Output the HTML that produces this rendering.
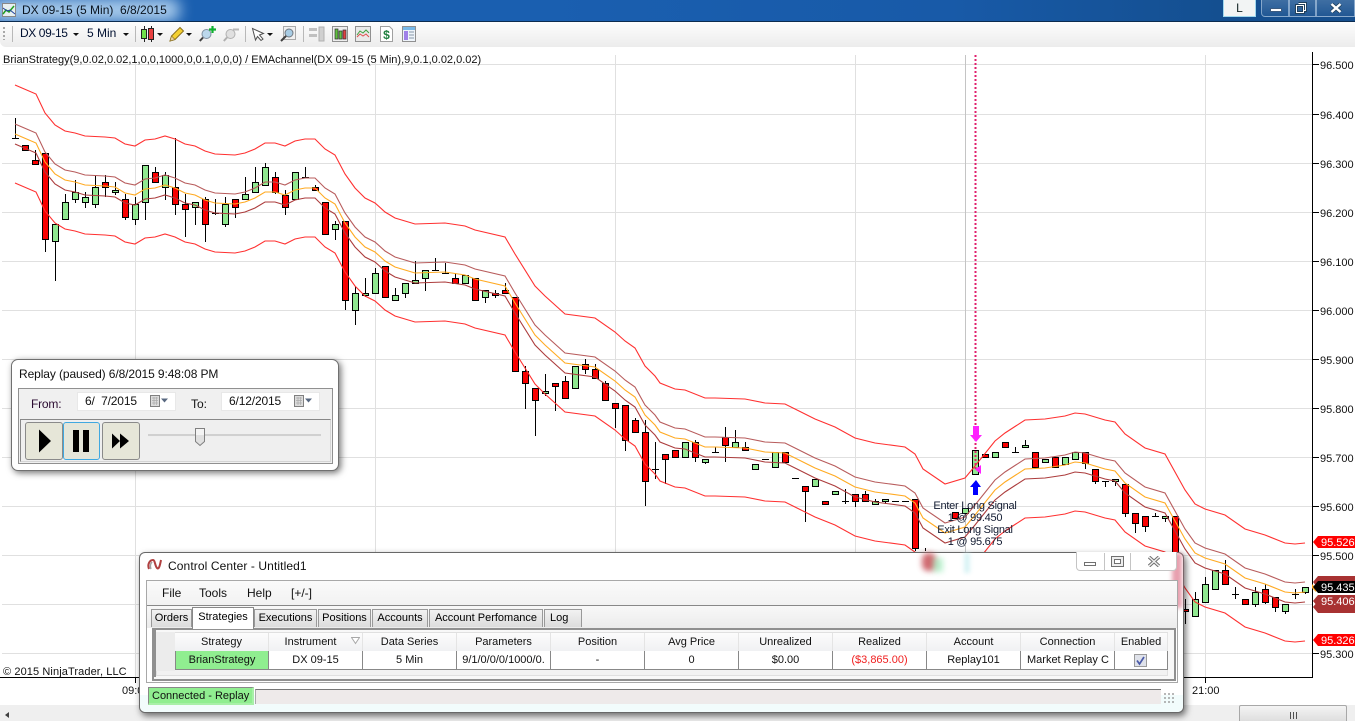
<!DOCTYPE html>
<html><head><meta charset="utf-8"><title>DX 09-15 (5 Min) 6/8/2015</title>
<style>
html,body{margin:0;padding:0;width:1355px;height:721px;overflow:hidden;background:#fff;font-family:"Liberation Sans",Arial,sans-serif;color:#000}
.a{position:absolute}
.t{position:absolute;white-space:nowrap;font-size:12px;line-height:14px}
#tb{left:0;top:0;width:1355px;height:21px;background:linear-gradient(90deg,#1a5fb0 0,#1a5fb0 40%,#185aa8 70%,#144f90 90%,#164f8e 100%);border-bottom:1px solid #0c2c50;box-sizing:content-box}
#glow{left:-10px;top:-2px;width:190px;height:24px;background:rgba(190,220,245,.85);filter:blur(7px);border-radius:10px}
#tool{left:0;top:22px;width:1355px;height:25px;background:linear-gradient(#fdfdfd,#ececec);border-radius:0 0 0 6px}
.sep{position:absolute;top:26px;width:1px;height:16px;background:#b8b8b8}
.ar{position:absolute;top:33px;width:0;height:0;border-left:3px solid transparent;border-right:3px solid transparent;border-top:3px solid #111}
.cap{position:absolute;top:0;height:17px;box-sizing:border-box;border:1px solid rgba(200,220,240,.55);border-top:0;background:linear-gradient(rgba(255,255,255,.18),rgba(255,255,255,.05))}
/* replay */
#rp{left:11px;top:359px;width:328px;height:112px;box-sizing:border-box;background:#fff;border:1px solid #707070;border-radius:7px;box-shadow:2px 2px 7px rgba(0,0,0,.55)}
.di{position:absolute;top:392px;height:19px;background:#fff;border:1px solid #e8e8e8;box-sizing:border-box}
.pb{position:absolute;box-sizing:border-box;background:#e6e6d8;border:1px solid #8a8a8a;border-radius:3px}
/* CC */
#cc{left:139px;top:552px;width:1045px;height:161px;box-sizing:border-box;background:#fff;border:1px solid #686868;border-radius:6px 6px 6px 6px;box-shadow:2px 3px 7px rgba(0,0,0,.55)}
.tab{position:absolute;top:609px;height:18px;box-sizing:border-box;border:1px solid #999;border-bottom:0;background:linear-gradient(#f2f2f2,#dcdcdc);font-size:11px;line-height:17px;text-align:center;white-space:nowrap;overflow:hidden}
.h{position:absolute;top:633px;height:18px;background:linear-gradient(#fcfcfc,#f0f1f3);border-right:1px solid #e4e4e4;box-sizing:border-box;font-size:11px;line-height:18px;text-align:center;white-space:nowrap;color:#111}
.c{position:absolute;top:651px;height:19px;background:#fff;border-right:1px solid #888;border-bottom:1px solid #888;box-sizing:border-box;font-size:11px;line-height:19px;text-align:center;white-space:nowrap;overflow:hidden;color:#111}
</style></head><body>

<svg class="a" style="left:0;top:0" width="1355" height="721" viewBox="0 0 1355 721" font-family="Liberation Sans,Arial,sans-serif">
<defs><path id="b" fill="none" d="M15 134L36 143 45 162 55 174 65 180 75 182 85 185 105 186 115 187 125 193 135 195 145 189 155 188 165 185 175 188 185 193 195 195 205 200 215 203 235 204 245 202 255 198 265 192 275 192 285 195 295 190 305 188 315 188 325 198 335 204 345 223 355 237 365 247 375 252 385 261 395 267 405 270 415 273 445 272 465 275 475 279 505 286 515 303 535 335 545 345 565 363 595 367 615 381 625 390 635 397 645 415 655 425 660 432 675 438 685 439 705 447 715 447 745 448 765 452 785 453 795 458 815 468 835 476 855 487 875 492 905 496 915 503 923 518 945 533 965 527 975 515 995 490 1005 482 1025 469 1045 468 1065 465 1075 462 1085 463 1105 469 1115 471 1125 483 1145 497 1165 503 1185 539 1195 553 1205 558 1225 564 1245 578 1265 584 1285 592 1295 593 1305 592"/></defs>
<!-- grid -->
<path stroke="#e0e0e0" fill="none" d="M2 64.5H1312M2 114.5H1312M2 163.5H1312M2 212.5H1312M2 261.5H1312M2 310.5H1312M2 359.5H1312M2 408.5H1312M2 457.5H1312M2 506.5H1312M2 555.5H1312M2 604.5H1312M2 653.5H1312M135.5 55V677M375.5 55V677M615.5 55V677M855.5 55V677M1205.5 55V677"/>
<path stroke="#c4c4c4" fill="none" d="M965.5 55V560"/>
<!-- wicks -->
<path stroke="#000" fill="none" d="M15.5 118V138M12 138.5h7M35.5 150V165M45.5 239V252M55.5 241V281M65.5 194V202M75.5 180V203M85.5 192V208M95.5 175V208M105.5 175V197M115.5 182V195M125.5 194V220M135.5 197V225M145.5 202V220M155.5 167V172M165.5 172V200M175.5 138V215M185.5 194V237M195.5 207V225M205.5 197V242M215.5 199V215M212 213.5h7M225.5 197V227M235.5 207V218M245.5 177V194M255.5 167V182M265.5 163V167M275.5 172V194M285.5 190V215M305.5 167V177M302 177.5h7M315.5 185V187M335.5 221V240M345.5 300V310M355.5 286V325M365.5 278V297M375.5 268V273M395.5 288V295M405.5 293V298M415.5 261V283M425.5 278V291M435.5 258V270M432 270.5h7M445.5 263V273M442 273.5h7M455.5 273V278M485.5 297V303M495.5 290V298M505.5 283V290M525.5 366V409M535.5 400V436M545.5 374V396M555.5 386V411M565.5 376V381M585.5 359V374M595.5 364V369M605.5 381V383M615.5 408V428M625.5 440V451M635.5 418V420M645.5 420V506M655.5 442V479M652 469.5h7M665.5 459V484M695.5 440V462M705.5 462V464M715.5 447V452M712 452.5h7M725.5 427V462M735.5 430V442M745.5 442V447M762 459.5h7M792 478.5h7M805.5 491V522M845.5 489V504M842 501.5h7M855.5 501V507M865.5 491V494M875.5 499V501M885.5 501V504M892 501.5h7M902 501.5h7M915.5 548V551M925.5 548V551M1015.5 447V452M1012 452.5h7M1025.5 440V445M1035.5 467V469M1085.5 463V469M1095.5 481V484M1102 481.5h7M1105.5 481V487M1115.5 481V486M1125.5 513V517M1135.5 523V533M1145.5 526V532M1152 516.5h7M1155.5 513V516M1165.5 518V522M1185.5 599V624M1195.5 592V599M1205.5 577V584M1225.5 560V570M1235.5 587V599M1232 594.5h7M1255.5 587V592M1255.5 604V607M1265.5 584V589M1265.5 602V604M1275.5 607V612M1285.5 611V614M1295.5 589V599M1292 594.5h7M1305.5 592V594"/>
<!-- red bodies -->
<path stroke="#000" fill="#f80000" d="M22.5 145.5h6v5h-6zM32.5 160.5h6v4h-6zM42.5 153.5h6v86h-6zM102.5 182.5h6v5h-6zM122.5 199.5h6v18h-6zM152.5 172.5h6v10h-6zM172.5 187.5h6v17h-6zM182.5 204.5h6v5h-6zM202.5 199.5h6v25h-6zM232.5 199.5h6v8h-6zM272.5 177.5h6v15h-6zM282.5 195.5h6v12h-6zM312.5 187.5h6v3h-6zM322.5 202.5h6v32h-6zM342.5 221.5h6v79h-6zM382.5 266.5h6v31h-6zM452.5 278.5h6v5h-6zM472.5 278.5h6v22h-6zM492.5 293.5h6v2h-6zM502.5 290.5h6v3h-6zM512.5 297.5h6v74h-6zM522.5 371.5h6v12h-6zM532.5 388.5h6v12h-6zM552.5 383.5h6v3h-6zM562.5 381.5h6v17h-6zM582.5 364.5h6v5h-6zM592.5 369.5h6v9h-6zM602.5 383.5h6v17h-6zM612.5 403.5h6v5h-6zM622.5 405.5h6v35h-6zM632.5 420.5h6v12h-6zM642.5 432.5h6v49h-6zM662.5 454.5h6v5h-6zM672.5 450.5h6v7h-6zM692.5 442.5h6v15h-6zM722.5 437.5h6v8h-6zM742.5 447.5h6v3h-6zM782.5 452.5h6v10h-6zM802.5 486.5h6v5h-6zM822.5 501.5h6v3h-6zM852.5 494.5h6v7h-6zM862.5 494.5h6v7h-6zM912.5 499.5h6v49h-6zM952.5 512.5h6v6h-6zM982.5 454.5h6v3h-6zM1002.5 442.5h6v5h-6zM1032.5 452.5h6v15h-6zM1052.5 457.5h6v10h-6zM1082.5 452.5h6v11h-6zM1092.5 469.5h6v12h-6zM1122.5 484.5h6v29h-6zM1132.5 513.5h6v10h-6zM1142.5 516.5h6v10h-6zM1172.5 516.5h6v50h-6zM1182.5 609.5h6v2h-6zM1222.5 570.5h6v14h-6zM1242.5 599.5h6v5h-6zM1262.5 589.5h6v13h-6zM1272.5 597.5h6v10h-6z"/>
<!-- green bodies -->
<path stroke="#000" fill="#90e890" d="M52.5 224.5h6v17h-6zM62.5 202.5h6v17h-6zM72.5 192.5h6v7h-6zM82.5 197.5h6v5h-6zM92.5 187.5h6v17h-6zM112.5 190.5h6v2h-6zM132.5 204.5h6v15h-6zM142.5 165.5h6v37h-6zM162.5 175.5h6v12h-6zM192.5 202.5h6v5h-6zM222.5 204.5h6v20h-6zM242.5 194.5h6v5h-6zM252.5 182.5h6v10h-6zM262.5 167.5h6v18h-6zM292.5 172.5h6v27h-6zM332.5 224.5h6v5h-6zM352.5 293.5h6v17h-6zM362.5 293.5h6v2h-6zM372.5 273.5h6v20h-6zM392.5 295.5h6v5h-6zM402.5 283.5h6v10h-6zM412.5 280.5h6v3h-6zM422.5 270.5h6v8h-6zM462.5 275.5h6v8h-6zM482.5 290.5h6v7h-6zM542.5 391.5h6v2h-6zM572.5 366.5h6v22h-6zM682.5 442.5h6v15h-6zM702.5 459.5h6v3h-6zM732.5 442.5h6v5h-6zM752.5 464.5h6v5h-6zM772.5 452.5h6v15h-6zM812.5 479.5h6v7h-6zM832.5 491.5h6v3h-6zM872.5 501.5h6v3h-6zM882.5 499.5h6v2h-6zM962.5 508.5h6v5h-6zM972.5 450.5h6v24h-6zM992.5 452.5h6v5h-6zM1022.5 445.5h6v2h-6zM1042.5 459.5h6v3h-6zM1062.5 457.5h6v7h-6zM1072.5 452.5h6v7h-6zM1112.5 479.5h6v2h-6zM1162.5 516.5h6v2h-6zM1192.5 599.5h6v17h-6zM1202.5 584.5h6v18h-6zM1212.5 570.5h6v19h-6zM1252.5 592.5h6v12h-6zM1282.5 604.5h6v7h-6zM1302.5 587.5h6v5h-6z"/>
<!-- bands -->
<use href="#b" y="-49" stroke="#ff3030" stroke-width="1.1"/>
<use href="#b" y="-10" stroke="#b85c5c" stroke-width="1.1"/>
<use href="#b" y="0" stroke="#ffaa22" stroke-width="1.1"/>
<use href="#b" y="10" stroke="#ac3c3c" stroke-width="1.1"/>
<use href="#b" y="49" stroke="#ff3030" stroke-width="1.1"/>
<!-- signal -->
<path stroke="#e0206e" stroke-width="2" stroke-dasharray="2 2" fill="none" d="M975.5 55V470"/>
<path fill="#ff20ff" d="M973 426h6v9h3l-6 7-6-7h3z"/>
<path fill="#ff20ff" d="M981 465v9l-6-4.5z"/>
<path fill="#0000ff" d="M976 480l5 7h-3v8h-5v-8h-3z"/>
<g font-size="11" text-anchor="middle" fill="#111a30" letter-spacing="-.25">
<text x="975" y="509">Enter Long Signal</text>
<text x="975" y="521">1 @ 99.450</text>
<text x="975" y="533">Exit Long Signal</text>
<text x="975" y="545">1 @ 95.675</text>
</g>
<!-- axis -->
<path stroke="#000" fill="none" d="M1312.5 52V678M0 677.5H1312.5M1312 64.5h7M1312 114.5h7M1312 163.5h7M1312 212.5h7M1312 261.5h7M1312 310.5h7M1312 359.5h7M1312 408.5h7M1312 457.5h7M1312 506.5h7M1312 555.5h7M1312 653.5h7M135.5 677v6M1205.5 677v6"/>
<g font-size="11" fill="#111">
<text x="1320" y="69">96.500</text><text x="1320" y="119">96.400</text><text x="1320" y="168">96.300</text><text x="1320" y="217">96.200</text><text x="1320" y="266">96.100</text><text x="1320" y="315">96.000</text><text x="1320" y="364">95.900</text><text x="1320" y="413">95.800</text><text x="1320" y="462">95.700</text><text x="1320" y="511">95.600</text><text x="1320" y="560">95.500</text><text x="1320" y="658">95.300</text>
<text x="122" y="694">09:00</text><text x="1192" y="694">21:00</text>
<text x="3" y="675" letter-spacing=".1">© 2015 NinjaTrader, LLC</text>
<text x="3" y="63">BrianStrategy(9,0.02,0.02,1,0,0,1000,0,0.1,0,0,0) / EMAchannel(DX 09-15 (5 Min),9,0.1,0.02,0.02)</text>
</g>
<!-- flags -->
<path fill="#ff0000" d="M1313 542l5-6h37v12h-37z"/>
<path fill="#a83232" d="M1313 582l5-6h37v12h-37z"/>
<path fill="#a83232" d="M1313 607l5-6h37v12h-37z"/>
<path fill="#ffaa22" d="M1312 584l5 5-1 3-4-4z"/>
<path fill="#000" d="M1313 587l5-6h37v12h-37z"/>
<path fill="#a83232" d="M1313 601l5-6h37v12h-37z"/>
<path fill="#ff0000" d="M1313 640l5-6h37v12h-37z"/>
<g font-size="11" fill="#fff"><text x="1321" y="546">95.526</text><text x="1321" y="591">95.435</text><text x="1321" y="605">95.406</text><text x="1321" y="644">95.326</text></g>
</svg>

<!-- title bar -->
<div class="a" id="tb"></div>
<div class="a" style="left:0;top:0;width:200px;height:21px;overflow:hidden"><div class="a" id="glow"></div></div>
<svg class="a" style="left:2px;top:3px" width="14" height="14" viewBox="0 0 14 14"><rect x=".5" y=".5" width="13" height="13" fill="#e8f0f0" stroke="#888"/><path d="M1 11l3-4 3 2 5-6" stroke="#20a020" fill="none" stroke-width="1.5"/><path d="M1 5l4 3 3-1 5 4" stroke="#2040a0" fill="none"/></svg>
<div class="t" style="left:22px;top:3px;font-size:12px;color:#0a1420">DX 09-15 (5 Min)&nbsp; 6/8/2015</div>
<div class="a" style="left:1223px;top:0;width:33px;height:17px;box-sizing:border-box;background:#f2f4f4;border:1px solid #9fd8ee;border-top:0;font-size:12px;line-height:16px;text-align:center;color:#122">L</div>
<div class="cap" style="left:1261px;width:28px;border-radius:0 0 0 4px"></div>
<div class="cap" style="left:1289px;width:27px"></div>
<div class="cap" style="left:1316px;width:39px"></div>
<div class="a" style="left:1270px;top:8px;width:10px;height:3px;background:#fff;border:1px solid #3a5a80;box-sizing:content-box;height:2px"></div>
<svg class="a" style="left:1295px;top:2px" width="13" height="12" viewBox="0 0 13 12"><path d="M3.5 1.5h7v7h-2M1.5 3.5h7v7h-7z" fill="none" stroke="#20405c" stroke-width="3"/><path d="M3.5 1.5h7v7h-2M1.5 3.5h7v7h-7z" fill="none" stroke="#fff"/></svg>
<svg class="a" style="left:1330px;top:3px" width="12" height="10" viewBox="0 0 12 10"><path d="M1.5 1l9 8M10.5 1l-9 8" stroke="#20405c" stroke-width="4"/><path d="M1.5 1l9 8M10.5 1l-9 8" stroke="#fff" stroke-width="2.4"/></svg>

<!-- toolbar -->
<div class="a" id="tool"></div>
<div class="a" style="left:3px;top:27px;width:2px;height:13px;background:repeating-linear-gradient(#a8a8a8 0 2px,transparent 2px 4px)"></div>
<div class="sep" style="left:12px"></div><div class="sep" style="left:135px"></div><div class="sep" style="left:245px"></div><div class="sep" style="left:303px"></div>
<div class="t" style="left:20px;top:26px;font-size:12px;color:#001030;letter-spacing:-.4px">DX 09-15</div><div class="ar" style="left:73px"></div>
<div class="t" style="left:87px;top:26px;font-size:12px;color:#001030">5 Min</div><div class="ar" style="left:123px"></div>
<svg class="a" style="left:140px;top:25px" width="16" height="18" viewBox="0 0 16 18"><path d="M4.5 1v16M11.5 1v16" stroke="#222"/><rect x="1.5" y="4.5" width="5" height="9" fill="#6fe04a" stroke="#222"/><rect x="8.5" y="3.5" width="5" height="11" fill="#e84040" stroke="#222"/></svg><div class="ar" style="left:157px"></div>
<svg class="a" style="left:169px;top:26px" width="16" height="16" viewBox="0 0 16 16"><path d="M1 15l1.5-5L11 1.5l3.5 3.5L6 13.5z" fill="#f4d030" stroke="#8a7020"/><path d="M1 15l1.5-5 3.5 3.5z" fill="#e8d0a0" stroke="#8a7020" stroke-width=".6"/></svg><div class="ar" style="left:186px"></div>
<svg class="a" style="left:199px;top:26px" width="17" height="16" viewBox="0 0 17 16"><circle cx="7.5" cy="8" r="4.5" fill="#bcd8ec" stroke="#8090a0"/><path d="M4 11.5L0.8 15" stroke="#404040" stroke-width="2"/><path d="M13.5 0v7M10 3.5h7" stroke="#10b030" stroke-width="2.2"/></svg>
<svg class="a" style="left:223px;top:26px" width="17" height="16" viewBox="0 0 17 16"><circle cx="7.5" cy="8" r="4.5" fill="#e0e0e0" stroke="#b0b0b0"/><path d="M4 11.5L0.8 15" stroke="#b0b0b0" stroke-width="2"/><path d="M10 3.5h6" stroke="#b8b8b8" stroke-width="2"/></svg>
<svg class="a" style="left:251px;top:27px" width="14" height="15" viewBox="0 0 14 15"><path d="M1.5 1.5l11 5-4 1.5 3.5 4-2 1.5-3.5-4-2 3.5z" fill="#fff" stroke="#505050"/></svg><div class="ar" style="left:267px"></div>
<svg class="a" style="left:280px;top:26px" width="16" height="16" viewBox="0 0 16 16"><rect x="3.5" y=".5" width="12" height="13" fill="#f0f0f0" stroke="#aaa"/><circle cx="9" cy="7" r="4" fill="#a8cce4" stroke="#707880"/><path d="M6 10L1 15" stroke="#404040" stroke-width="2"/></svg>
<svg class="a" style="left:309px;top:26px" width="16" height="16" viewBox="0 0 16 16"><path d="M0 2h8v3H0zM0 8h8v3H0z" fill="#c0c0c0"/><rect x="10" y="1" width="5" height="14" fill="#d0d0d0" stroke="#b0b0b0"/></svg>
<svg class="a" style="left:332px;top:26px" width="16" height="16" viewBox="0 0 16 16"><rect x=".5" y=".5" width="15" height="15" fill="#eee" stroke="#909090"/><path d="M3 3v10h3V3zM7 5v8h3V5z" fill="#60c040" stroke="#333" stroke-width=".7"/><path d="M11 4v9h3V4z" fill="#e04040" stroke="#333" stroke-width=".7"/></svg>
<svg class="a" style="left:355px;top:26px" width="16" height="16" viewBox="0 0 16 16"><rect x=".5" y=".5" width="15" height="15" fill="#eaeaea" stroke="#909090"/><path d="M2 9l3-4 3 2 3-3 3 3" stroke="#40a040" fill="none"/><path d="M2 11l3-3 3 2 3-2 3 3" stroke="#e05050" fill="none"/></svg>
<svg class="a" style="left:380px;top:26px" width="13" height="16" viewBox="0 0 13 16"><path d="M.5.5h9l3 3v12H.5z" fill="#fff" stroke="#a0a0a0"/><text x="6.5" y="13" font-size="12" font-weight="bold" text-anchor="middle" fill="#208040" font-family="Liberation Sans,sans-serif">$</text></svg>
<svg class="a" style="left:402px;top:26px" width="14" height="16" viewBox="0 0 14 16"><rect x=".5" y=".5" width="13" height="15" fill="#eef4fa" stroke="#909090"/><rect x="1" y="1" width="12" height="3" fill="#78b8e8"/><rect x="2" y="5" width="4" height="9" fill="#a080e8"/><path d="M7 6h5M7 9h5M7 12h5" stroke="#8898a8"/></svg>

<!-- scrollbar -->
<div class="a" style="left:0;top:705px;width:1355px;height:16px;background:#efefef"></div>
<div class="a" style="left:5px;top:712px;width:0;height:0;border-top:3px solid transparent;border-bottom:3px solid transparent;border-right:4px solid #404040"></div>
<div class="a" style="left:1239px;top:705px;width:108px;height:16px;box-sizing:border-box;border:1px solid #a8a8a8;border-bottom:0;border-radius:2px 2px 0 0;background:linear-gradient(#f4f4f4,#dedede)"></div>
<div class="a" style="left:1290px;top:712px;width:7px;height:7px;background:repeating-linear-gradient(90deg,#505050 0 1px,transparent 1px 3px)"></div>

<!-- replay -->
<div class="a" id="rp"></div>
<div class="t" style="left:19px;top:367px;color:#111;letter-spacing:-.1px">Replay (paused) 6/8/2015 9:48:08 PM</div>
<div class="a" style="left:18px;top:388px;width:315px;height:76px;box-sizing:border-box;background:#f0f0f0;border:1px solid #909090"></div>
<div class="t" style="left:31px;top:397px;color:#2a0a30;letter-spacing:-.2px">From:</div>
<div class="t" style="left:191px;top:397px;color:#111">To:</div>
<div class="di" style="left:77px;width:99px"></div><div class="di" style="left:221px;width:99px"></div>
<div class="t" style="left:85px;top:394px;color:#111;letter-spacing:-.15px">6/&nbsp; 7/2015</div>
<div class="t" style="left:229px;top:394px;color:#111;letter-spacing:-.15px">6/12/2015</div>
<svg class="a" style="left:150px;top:395px" width="26" height="13" viewBox="0 0 26 13"><rect x=".5" y=".5" width="9" height="11" fill="#dcdcdc" stroke="#808080"/><path d="M2 3h6M2 5.5h6M2 8h6M4 2v8M6.5 2v8" stroke="#aaa" stroke-width=".7"/><path d="M11 3.5h7l-3.5 4z" fill="#586880"/></svg>
<svg class="a" style="left:294px;top:395px" width="26" height="13" viewBox="0 0 26 13"><rect x=".5" y=".5" width="9" height="11" fill="#dcdcdc" stroke="#808080"/><path d="M2 3h6M2 5.5h6M2 8h6M4 2v8M6.5 2v8" stroke="#aaa" stroke-width=".7"/><path d="M11 3.5h7l-3.5 4z" fill="#586880"/></svg>
<div class="a" style="left:20px;top:419px;width:311px;height:43px;box-sizing:border-box;border:1px solid #d4d4d4;border-top:1px solid #888;border-left:1px solid #888;background:#efefef"></div>
<div class="pb" style="left:25px;top:422px;width:38px;height:38px"></div>
<div class="pb" style="left:63px;top:422px;width:37px;height:38px;border-color:#40a8e0;background:#e4e6da"></div>
<div class="pb" style="left:102px;top:422px;width:38px;height:38px"></div>
<svg class="a" style="left:25px;top:422px" width="115" height="38" viewBox="0 0 115 38"><path d="M14 7.500v23l12-11.500z"/><rect x="48" y="8" width="6" height="22"/><rect x="58" y="8" width="6" height="22"/><path d="M87 11.500v15l8-7.500v7.500l9-7.500-9-7.500v7.500z"/></svg>
<div class="a" style="left:148px;top:434px;width:173px;height:2px;background:#d0d0d0;border-bottom:1px solid #eee"></div>
<svg class="a" style="left:194px;top:427px" width="12" height="20" viewBox="0 0 12 20"><path d="M1.500 1.500h9v13l-4.500 4-4.500-4z" fill="#e0e0e0" stroke="#808080"/><path d="M2 2h8v6H2z" fill="#f4f4f4"/></svg>

<!-- control center -->
<div class="a" id="cc"></div>
<div class="a" style="left:140px;top:695px;width:1043px;height:17px;background:#f2fcfc;border-radius:0 0 6px 6px"></div>
<div class="a" style="left:922px;top:553px;width:14px;height:18px;background:#c85058;filter:blur(3px);opacity:.85;border-radius:6px"></div>
<div class="a" style="left:933px;top:558px;width:10px;height:14px;background:#90e8b0;filter:blur(3px);opacity:.6"></div>
<div class="a" style="left:964px;top:553px;width:6px;height:20px;background:#c8eef0;filter:blur(2px);opacity:.7"></div>
<div class="a" style="left:1172px;top:553px;width:10px;height:55px;background:#d86078;filter:blur(2px);opacity:.6"></div>
<svg class="a" style="left:147px;top:558px" width="16" height="14" viewBox="0 0 16 14"><path d="M2 11C0 6 3 2 6 2c2 0 2 6 4 8s3-3 4-8" fill="none" stroke="#b04040" stroke-width="2"/><path d="M5 4C3 6 3 9 4 11" fill="none" stroke="#a0a0a0" stroke-width="1.500"/></svg>
<div class="t" style="left:168px;top:559px;color:#111;letter-spacing:.1px">Control Center - Untitled1</div>
<div class="a" style="left:1076px;top:552px;width:101px;height:19px;box-sizing:border-box;border:1px solid #c4c4c4;border-top:0;border-radius:0 0 4px 4px;background:#fff"></div>
<div class="a" style="left:1104px;top:553px;width:1px;height:17px;background:#c4c4c4"></div>
<div class="a" style="left:1130px;top:553px;width:1px;height:17px;background:#c4c4c4"></div>
<div class="a" style="left:1084px;top:562px;width:12px;height:4px;box-sizing:border-box;border:1px solid #707070"></div>
<svg class="a" style="left:1111px;top:556px" width="13" height="11" viewBox="0 0 13 11"><rect x=".5" y=".5" width="12" height="10" fill="#eee" stroke="#707070"/><rect x="3.500" y="3.500" width="6" height="4" fill="#fff" stroke="#707070"/></svg>
<svg class="a" style="left:1148px;top:556px" width="12" height="11" viewBox="0 0 12 11"><path d="M1 1l10 9M11 1l-10 9" stroke="#707070" stroke-width="3.400"/><path d="M1 1l10 9M11 1l-10 9" stroke="#f0f0f0" stroke-width="1.400"/></svg>

<div class="a" style="left:146px;top:580px;width:1032px;height:103px;box-sizing:border-box;border:1px solid #a8a8a8;background:#fff"></div>
<div class="a" style="left:147px;top:581px;width:1030px;height:24px;background:linear-gradient(#fafafa,#f2f2f2);border-bottom:1px solid #888"></div>
<div class="t" style="left:162px;top:586px;color:#111">File</div>
<div class="t" style="left:199px;top:586px;color:#111">Tools</div>
<div class="t" style="left:247px;top:586px;color:#111">Help</div>
<div class="t" style="left:291px;top:586px;color:#111">[+/-]</div>
<div class="a" style="left:147px;top:606px;width:1030px;height:22px;background:linear-gradient(#f8f8f8,#ececec)"></div>
<div class="tab" style="left:151px;width:41px">Orders</div>
<div class="tab" style="left:254px;width:63px">Executions</div>
<div class="tab" style="left:318px;width:53px">Positions</div>
<div class="tab" style="left:372px;width:56px">Accounts</div>
<div class="tab" style="left:429px;width:114px">Account Perfomance</div>
<div class="tab" style="left:544px;width:38px;text-align:left;padding-left:5px">Log</div>
<div class="tab" style="left:192px;top:607px;width:62px;height:22px;background:#fff;border-color:#888;line-height:18px;z-index:2">Strategies</div>

<div class="a" style="left:152px;top:628px;width:1024px;height:53px;box-sizing:border-box;border:2px solid #909090;background:#f8f8f8;border-top-width:2px"></div>
<div class="a" style="left:156px;top:632px;width:1012px;height:44px;box-sizing:border-box;border:1px solid #e0e0e0;background:#f2f2f2"></div>
<div class="a" style="left:154px;top:630px;width:2px;height:47px;background:#909090"></div>
<div class="a" style="left:156px;top:632px;width:19px;height:39px;background:#ececec"></div>

<div class="h" style="left:175px;width:94px">Strategy</div>
<div class="h" style="left:269px;width:94px;padding-right:10px">Instrument</div>
<svg class="a" style="left:351px;top:637px" width="9" height="8" viewBox="0 0 9 8"><path d="M.5.500h8l-4 6z" fill="#fff" stroke="#a8a8a8"/></svg>
<div class="h" style="left:363px;width:94px">Data Series</div>
<div class="h" style="left:457px;width:94px">Parameters</div>
<div class="h" style="left:551px;width:94px">Position</div>
<div class="h" style="left:645px;width:94px">Avg Price</div>
<div class="h" style="left:739px;width:94px">Unrealized</div>
<div class="h" style="left:833px;width:94px">Realized</div>
<div class="h" style="left:927px;width:94px">Account</div>
<div class="h" style="left:1021px;width:94px">Connection</div>
<div class="h" style="left:1115px;width:53px">Enabled</div>

<div class="c" style="left:175px;width:94px;background:#90ee90;border-left:1px solid #888">BrianStrategy</div>
<div class="c" style="left:269px;width:94px">DX 09-15</div>
<div class="c" style="left:363px;width:94px">5 Min</div>
<div class="c" style="left:457px;width:94px">9/1/0/0/0/1000/0.</div>
<div class="c" style="left:551px;width:94px">-</div>
<div class="c" style="left:645px;width:94px">0</div>
<div class="c" style="left:739px;width:94px">$0.00</div>
<div class="c" style="left:833px;width:94px;color:#f02020">($3,865.00)</div>
<div class="c" style="left:927px;width:94px">Replay101</div>
<div class="c" style="left:1021px;width:94px;text-align:left;padding-left:6px">Market Replay C</div>
<div class="c" style="left:1115px;width:53px"></div>
<svg class="a" style="left:1134px;top:654px" width="13" height="13" viewBox="0 0 13 13"><rect x=".5" y=".5" width="12" height="12" fill="#dfe2ea" stroke="#9a9a9a"/><path d="M3 6.500l2.500 3.500L10 3" fill="none" stroke="#4a5aa8" stroke-width="1.700"/></svg>

<!-- status -->
<div class="a" style="left:148px;top:687px;width:106px;height:18px;box-sizing:border-box;background:#90ee90;border:1px solid #888;border-right:2px solid #a8f0a8;border-bottom:2px solid #a8f0a8;font-size:11px;line-height:16px;padding-left:3px;white-space:nowrap;color:#111">Connected - Replay</div>
<div class="a" style="left:255px;top:689px;width:906px;height:15px;box-sizing:border-box;background:#eeeaea;border-top:1px solid #777;border-left:1px solid #aaa"></div>
<div class="a" style="left:1163px;top:692px;width:12px;height:12px;background:radial-gradient(#a0a0a0 1px,transparent 1px) 0 0/4px 4px"></div>
</body></html>
